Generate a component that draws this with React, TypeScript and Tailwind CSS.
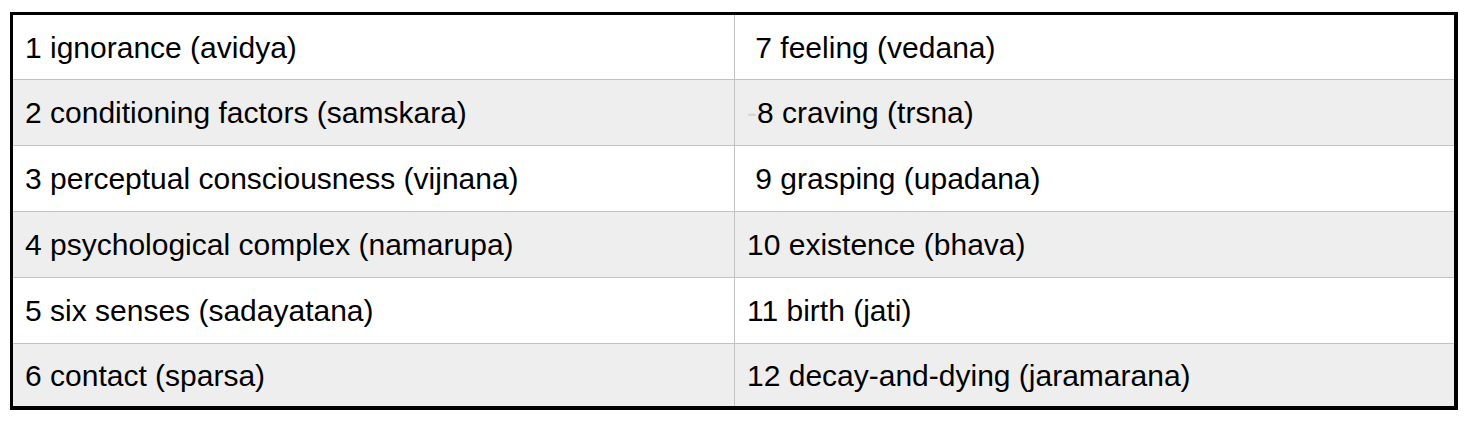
const rows = [
  { left: "1 ignorance (avidya)", right: " 7 feeling (vedana)", h: "h-[64px]" },
  { left: "2 conditioning factors (samskara)", right: "8 craving (trsna)", h: "h-[66px]", dash: true },
  { left: "3 perceptual consciousness (vijnana)", right: " 9 grasping (upadana)", h: "h-[66px]" },
  { left: "4 psychological complex (namarupa)", right: "10 existence (bhava)", h: "h-[66px]" },
  { left: "5 six senses (sadayatana)", right: "11 birth (jati)", h: "h-[66px]" },
  { left: "6 contact (sparsa)", right: "12 decay-and-dying (jaramarana)", h: "h-[63px]" },
];

const App = () => {
  return (
    <div className="min-h-screen bg-white pl-[10px] pt-[12px]">
      <div
        className="w-[1448px] border-t-[3px] border-l-[3px] border-r-[4px] border-b-[4px] border-black text-[30px] text-black"
        style={{ fontFamily: '"Liberation Sans", Arial, sans-serif' }}
      >
        {rows.map((row, i) => (
          <div
            key={i}
            className={`grid grid-cols-[721px_1fr] ${row.h} ${
              i > 0 ? "border-t border-[#c3c3c3]" : ""
            } ${i % 2 === 1 ? "bg-[#eeeeee]" : "bg-white"}`}
          >
            <div className="flex items-center pl-[12px] whitespace-pre">
              {row.left}
            </div>
            <div className="flex items-center border-l border-[#c3c3c3] pl-[12px] whitespace-pre">
              {row.dash && <span className="text-[#d6d6d6]">-</span>}
              {row.right}
            </div>
          </div>
        ))}
      </div>
    </div>
  );
};

export default App;
